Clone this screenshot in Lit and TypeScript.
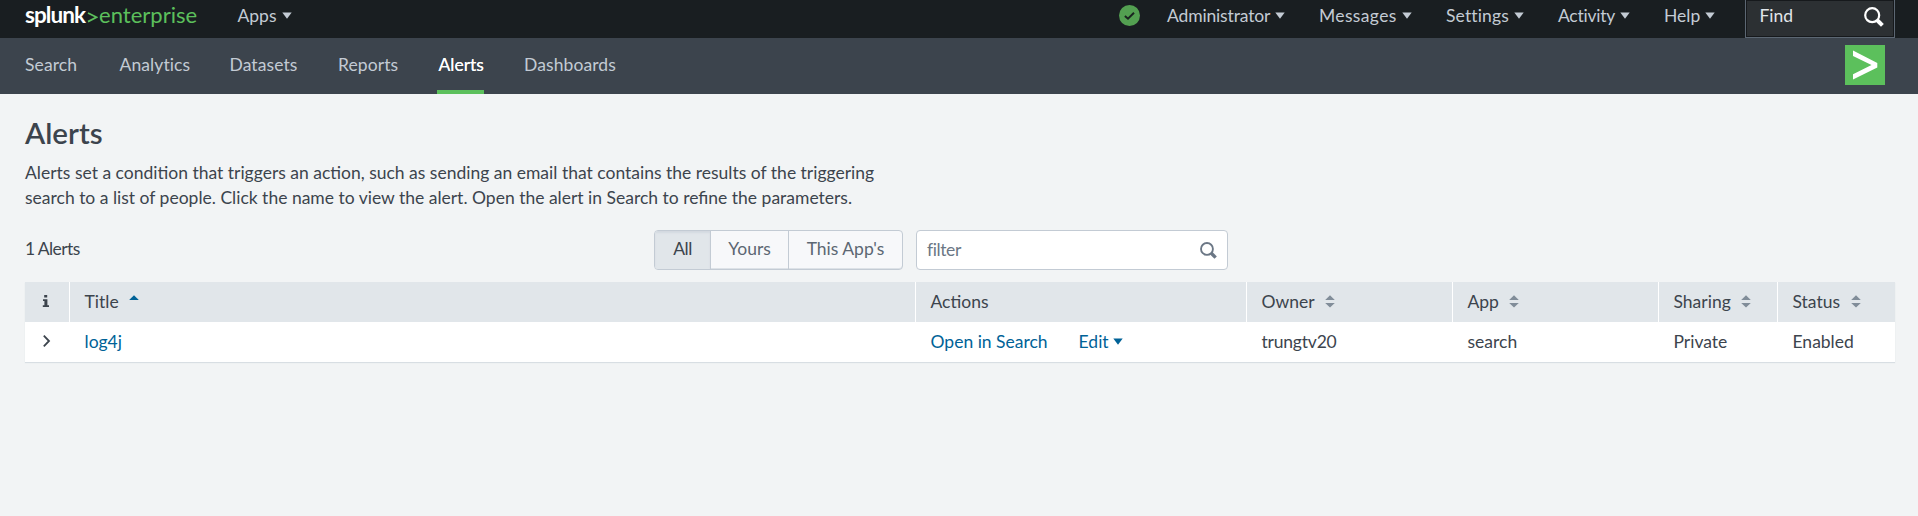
import { LitElement, html, css, svg } from "lit";
import { customElement, state } from "lit/decorators.js";

const caret = (cls = "caret") => html`<svg class=${cls} width="10" height="7" viewBox="0 0 10 7"><path d="M0.3 0.4h9.4L5 6.8z" fill="currentColor"/></svg>`;

const magnifier = (size: number, cls: string, ring: number) => html`<svg class=${cls} width=${size} height=${size} viewBox="0 0 20 20">
  ${svg`<circle cx="8.2" cy="8.2" r="7" fill="none" stroke="currentColor" stroke-width=${ring}/><path d="M13 13l5.400 5.400" fill="none" stroke="currentColor" stroke-width="4"/>`}
</svg>`;

const sortIcon = html`<svg class="sort" width="10" height="13" viewBox="0 0 10 13"><path d="M0.2 5L5 0.2 9.8 5zM0.2 8h9.6L5 12.6z" fill="#818d99"/></svg>`;

@customElement("splunk-bar")
class SplunkBar extends LitElement {
  static styles = css`
    :host { display: block; }
    .bar {
      display: flex; box-sizing: border-box; height: 38px; padding: 0 23px 0 25px;
      background: #191e21; color: #c3cbd4; line-height: 32px;
    }
    .logo { display: flex; width: 212.5px; }
    .brand { width: 62px; color: #fff; font-size: 22.5px; font-weight: 700; letter-spacing: -0.95px; line-height: 30px; }
    .prompt { margin-top: 12px; }
    .product { margin-left: 1px; color: #5cc05c; font-size: 22px; line-height: 30px; letter-spacing: 0.03px; }
    .apps { flex: 1; }
    .status { width: 48px; padding-top: 5px; box-sizing: border-box; line-height: 0; }
    .menus { display: grid; grid-template-columns: 152px 127px 112px 106px 81px; }
    .item { display: flex; white-space: nowrap; }
    .m0 { letter-spacing: -0.15px; }
    .m1 { letter-spacing: 0.35px; }
    .m2 { letter-spacing: 0.15px; }
    .m3 { letter-spacing: -0.25px; }
    .caret { margin: 12px 0 0 5px; }
    .find {
      display: flex; justify-content: space-between; box-sizing: border-box; width: 150px; height: 38px;
      padding: 0 10px 0 13.5px; border: 1px solid #5c6773; border-top: 0; color: #e1e6eb;
      background: #2c3033; box-shadow: inset 0 0 0 1px #16191c;
    }
    .search { margin-top: 7px; color: #fff; }
  `;
  render() {
    return html`<div class="bar">
      <div class="logo">
        <span class="brand">splunk</span>
        <svg class="prompt" width="11" height="11" viewBox="0 0 11 11"><path d="M1 1l8.5 4.2L1 9.6" fill="none" stroke="#5cc05c" stroke-width="1.8"/></svg>
        <span class="product">enterprise</span>
      </div>
      <div class="item apps"><span>Apps</span>${caret()}</div>
      <div class="status"><svg width="21" height="21" viewBox="0 0 21 21"><circle cx="10.5" cy="10.5" r="10.5" fill="#53a051"/><path d="M5.9 10.9l3.1 2.8 6-5.9" fill="none" stroke="#1a2420" stroke-width="2"/></svg></div>
      <div class="menus">
        ${["Administrator", "Messages", "Settings", "Activity", "Help"].map(
          (m, i) => html`<div class="item"><span class="m${i}">${m}</span>${caret()}</div>`
        )}
      </div>
      <div class="find"><span>Find</span>${magnifier(20, "search", 2.2)}</div>
    </div>`;
  }
}

@customElement("app-nav")
class AppNav extends LitElement {
  static styles = css`
    :host { display: block; }
    .nav {
      display: flex; justify-content: space-between; box-sizing: border-box; height: 56px;
      padding: 0 33px 0 25px; background: #3c444d; color: #c3cbd4;
    }
    .tabs { display: grid; grid-template-columns: 94.5px 110px 108.500px 99px 87px 96px; }
    .tab { line-height: 53px; white-space: nowrap; letter-spacing: 0.1px; }
    .on {
      justify-self: start; box-sizing: border-box; width: 47px; height: 56px; padding-left: 1.5px;
      border-bottom: 4px solid #5cc05c; color: #fff; letter-spacing: 0; text-shadow: 0 0 .3px #fff;
    }
    .badge { margin-top: 7px; }
  `;
  render() {
    return html`<div class="nav">
      <div class="tabs">
        ${["Search", "Analytics", "Datasets", "Reports", "Alerts", "Dashboards"].map(
          (t) => html`<div class="tab ${t === "Alerts" ? "on" : ""}">${t}</div>`
        )}
      </div>
      <svg class="badge" width="40" height="40" viewBox="0 0 40 40"><path d="M0 0h40v40H0z" fill="#5cc05c"/><path d="M8 5.5L32.3 18v4.4L8 34.5v-5.3L26.5 20 8 11z" fill="#fff"/></svg>
    </div>`;
  }
}

@customElement("app-root")
class AppRoot extends LitElement {
  @state() private scope = "All";

  static styles = css`
    :host {
      display: block; height: 516px; background: #f2f4f5; color: #3c444d;
      font: 17.5px/25px Lato, "Liberation Sans", sans-serif; overflow: hidden;
    }
    .page { padding: 0 23px 0 25px; }
    h1 { margin: 0; padding-top: 19px; font-size: 29.5px; line-height: 40px; font-weight: 600; }
    .intro { margin: 7px 0 0; line-height: 25px; white-space: pre; }
    .tools { display: flex; margin-top: 20px; height: 40px; }
    .count { width: 629px; line-height: 38px; letter-spacing: -0.6px; }
    .group {
      display: grid; grid-template-columns: 55px 78px 1fr; box-sizing: border-box; width: 249px; height: 40px;
      border: 1px solid #c3cbd4; border-radius: 4px; background: #f7f8fa; overflow: hidden;
      color: #5c6773; line-height: 36px; text-align: center; box-shadow: inset 0 -1px 0 #dde2e7;
    }
    .seg + .seg { border-left: 1px solid #c3cbd4; }
    .sel { background: #e1e6ea; color: #3c444d; letter-spacing: -0.5px; box-shadow: inset 0 2px 2px #d3d9e0; }
    .filter {
      display: flex; justify-content: space-between; box-sizing: border-box; width: 312px; height: 40px;
      margin-left: 13px; padding: 0 10px; border: 1px solid #c3cbd4; border-radius: 4px; background: #fff;
      color: #6b7785; line-height: 37px; letter-spacing: -0.4px;
    }
    .glass { margin-top: 11px; }
    .table { margin-top: 12px; background: #fff; box-shadow: 0 1px 1px #d8dee3; }
    .row {
      display: grid; grid-template-columns: 44px 846px 331px 206px 206px 119px 118px;
      height: 40px; line-height: 39px;
    }
    .cell { display: flex; box-sizing: border-box; padding-left: 15.5px; white-space: nowrap; }
    .head .cell { background: #e1e6ea; }
    .head .cell + .cell { border-left: 1px solid #fff; padding-left: 14.5px; }
    .row .cell.first { padding-left: 17px; }
    .asc { margin: 13px 0 0 10px; color: #006297; }
    .sort { margin: 13px 0 0 10.5px; }
    .link { color: #006297; }
    .edit { margin-left: 31px; }
    .small { margin: 16px 0 0 4px; color: #006297; }
    .info { margin-top: 13px; }
    .chev { margin-top: 12px; }
    .user { letter-spacing: -0.2px; }
  `;

  render() {
    return html`
      <splunk-bar></splunk-bar>
      <app-nav></app-nav>
      <div class="page">
        <h1>Alerts</h1>
        <p class="intro">Alerts set a condition that triggers an action, such as sending an email that contains the results of the triggering
search to a list of people. Click the name to view the alert. Open the alert in Search to refine the parameters.</p>
        <div class="tools">
          <div class="count">1 Alerts</div>
          <div class="group">
            ${["All", "Yours", "This App's"].map(
              (s) => html`<div class="seg ${s === this.scope ? "sel" : ""}" @click=${() => (this.scope = s)}>${s}</div>`
            )}
          </div>
          <div class="filter"><span>filter</span>${magnifier(17, "glass", 2.2)}</div>
        </div>
        <div class="table">
          <div class="row head">
            <div class="cell first"><svg class="info" width="8" height="12" viewBox="0 0 8 12"><path d="M2.2 0h3v2.4h-3zM1 4.2h4.4v6h1.6V12H.8v-1.800h1.600V6H1z" fill="#3c444d"/></svg></div>
            <div class="cell">Title<svg class="asc" width="10" height="5" viewBox="0 0 10 5"><path d="M.2 5L5 .2 9.800 5z" fill="currentColor"/></svg></div>
            <div class="cell">Actions</div>
            ${["Owner", "App", "Sharing", "Status"].map((c) => html`<div class="cell">${c}${sortIcon}</div>`)}
          </div>
          <div class="row">
            <div class="cell first"><svg class="chev" width="9" height="14" viewBox="0 0 9 14"><path d="M1.800 1.700L7 7l-5.200 5.300" fill="none" stroke="#3c444d" stroke-width="1.800"/></svg></div>
            <div class="cell link">log4j</div>
            <div class="cell link">Open in Search<span class="edit">Edit</span>${caret("small")}</div>
            <div class="cell user">trungtv20</div>
            <div class="cell">search</div>
            <div class="cell">Private</div>
            <div class="cell">Enabled</div>
          </div>
        </div>
      </div>`;
  }
}
